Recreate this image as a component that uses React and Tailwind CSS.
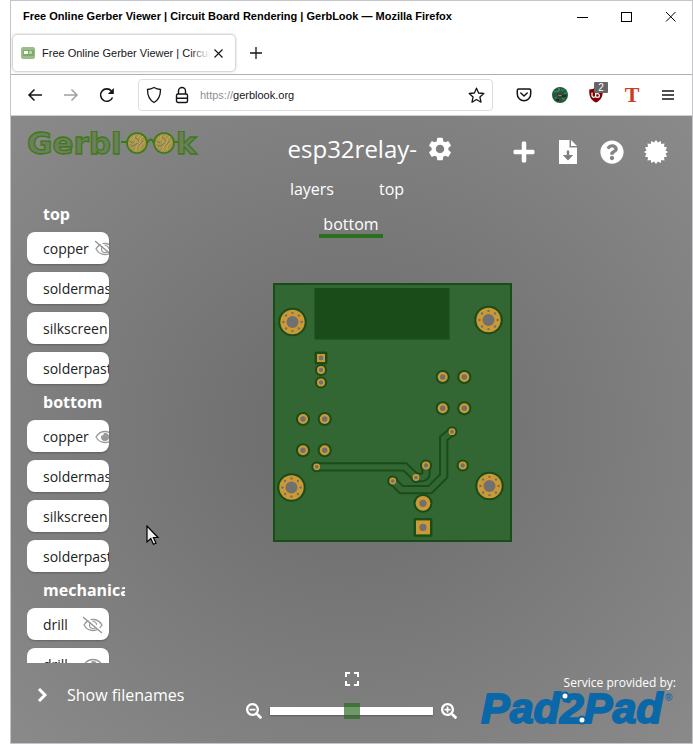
import React from "react";
import { FaPlus, FaQuestionCircle, FaSearchMinus, FaSearchPlus } from "react-icons/fa";
import { MdSettings } from "react-icons/md";

const layerGroups = [
  {
    name: "top",
    layers: [
      { name: "copper", visible: false },
      { name: "soldermask", visible: false },
      { name: "silkscreen", visible: false },
      { name: "solderpaste", visible: false },
    ],
  },
  {
    name: "bottom",
    layers: [
      { name: "copper", visible: true },
      { name: "soldermask", visible: true },
      { name: "silkscreen", visible: true },
      { name: "solderpaste", visible: true },
    ],
  },
  {
    name: "mechanical",
    layers: [
      { name: "drill", visible: false },
      { name: "drill", visible: true },
    ],
  },
];

function WindowTitleBar() {
  return (
    <header className="flex h-[31px] shrink-0 items-center pl-3 pr-[10px]">
      <h1 className="flex-1 truncate text-[11px] font-bold text-black">
        Free Online Gerber Viewer | Circuit Board Rendering | GerbLook — Mozilla Firefox
      </h1>
      <div className="flex gap-[22px]">
        <button aria-label="Minimize" className="flex size-[22px] items-center justify-center">
          <svg width="12" height="12" shapeRendering="crispEdges"><path d="M0 6.5h11" stroke="#000" /></svg>
        </button>
        <button aria-label="Maximize" className="flex size-[22px] items-center justify-center">
          <svg width="12" height="12" shapeRendering="crispEdges"><rect x=".5" y="1.5" width="10" height="9" fill="none" stroke="#000" /></svg>
        </button>
        <button aria-label="Close window" className="flex size-[22px] items-center justify-center">
          <svg width="12" height="12"><path d="M1 1l9.500 9.500M10.500 1L1 10.500" stroke="#000" /></svg>
        </button>
      </div>
    </header>
  );
}

function TabStrip() {
  return (
    <div className="flex h-[43px] shrink-0 items-center gap-[9px] border-b border-[#b0b0b0] pl-[2px]">
      <div className="flex h-9 w-[222px] items-center rounded bg-white pl-2 pr-[9px] shadow-[0_0_3px_rgba(0,0,0,0.45)]">
        <svg width="14" height="12" viewBox="0 0 14 12" className="shrink-0">
          <rect width="14" height="12" rx="2" fill="#9bbd88" />
          <rect x="2" y="3" width="11" height="6" fill="#7faa6c" />
          <rect x="3" y="4" width="4" height="3" fill="#fff" />
          <rect x="8" y="4" width="3" height="3" fill="#b9d3ab" />
        </svg>
        <div className="relative ml-[7px] flex-1 overflow-hidden whitespace-nowrap text-[11px] text-[#15141a]">
          Free Online Gerber Viewer | Circuit Board
          <span className="absolute inset-y-0 right-0 w-5 bg-gradient-to-r from-transparent to-white" />
        </div>
        <button aria-label="Close tab" className="flex size-4 items-center justify-center">
          <svg width="9" height="9"><path d="M.5 .5l8 8M8.500 .5l-8 8" stroke="#15141a" strokeWidth="1.100" /></svg>
        </button>
      </div>
      <button aria-label="New tab" className="flex size-6 items-center justify-center">
        <svg width="12" height="12"><path d="M6 0v12M0 6h12" stroke="#15141a" strokeWidth="1.300" /></svg>
      </button>
    </div>
  );
}

function ToolButton({ label, children }) {
  return (
    <button aria-label={label} className="relative flex h-8 w-9 shrink-0 items-center justify-center">
      {children}
    </button>
  );
}

function NavBar() {
  return (
    <nav className="flex h-10 shrink-0 items-center px-[6px]">
      <ToolButton label="Back">
        <svg width="16" height="16" fill="none" stroke="#15141a" strokeWidth="1.500"><path d="M15 8H2M7.500 2.500L2 8l5.500 5.500" /></svg>
      </ToolButton>
      <ToolButton label="Forward">
        <svg width="16" height="16" fill="none" stroke="#a0a0a3" strokeWidth="1.500"><path d="M1 8h13M8.500 2.500L14 8l-5.500 5.500" /></svg>
      </ToolButton>
      <ToolButton label="Reload">
        <svg width="16" height="16" fill="none" stroke="#15141a" strokeWidth="1.600"><path d="M13.500 10.500A6.200 6.200 0 1 1 12.500 4" /><path d="M14.800 1v6h-6z" fill="#15141a" stroke="none" /></svg>
      </ToolButton>
      <div className="mx-[13px] flex h-8 min-w-0 flex-1 items-center rounded border border-[#dedee2] px-[7px]">
        <svg width="16" height="18" viewBox="0 0 16 18" fill="none" stroke="#15141a" strokeWidth="1.300" className="shrink-0">
          <path d="M8 1.500C5.800 2.800 3.800 3.400 1.500 3.500c0 5 1 10 6.500 13 5.500-3 6.500-8 6.500-13C12.200 3.400 10.200 2.800 8 1.500z" />
        </svg>
        <svg width="14" height="18" viewBox="0 0 14 18" fill="none" stroke="#15141a" strokeWidth="1.400" className="ml-[13px] shrink-0">
          <rect x="1.500" y="8" width="11" height="8.500" rx="1.500" />
          <path d="M3.500 8V5a3.500 3.500 0 0 1 7 0v3M2 12.200h10" />
        </svg>
        <a href="#gerblook" className="ml-[11px] min-w-0 flex-1 truncate text-[11px] text-[#8f8f96]">
          https://<span className="text-[#15141a]">gerblook.org</span>
        </a>
        <button aria-label="Bookmark this page">
          <svg width="17" height="17" viewBox="0 0 17 17" fill="none" stroke="#15141a" strokeWidth="1.300" strokeLinejoin="round">
            <path d="M8.500 1.200l2.100 4.800 5.200.5-3.900 3.500 1.100 5.200-4.500-2.700L4 15.200 5.100 10 1.200 6.500l5.200-.5z" />
          </svg>
        </button>
      </div>
      <ToolButton label="Save to Pocket">
        <svg width="16" height="14" viewBox="0 0 16 14" fill="none" stroke="#15141a" strokeWidth="1.500" strokeLinecap="round" strokeLinejoin="round">
          <path d="M2.500 1h11a1.200 1.200 0 0 1 1.200 1.200V6a6.700 6.700 0 0 1-13.400 0V2.200A1.200 1.200 0 0 1 2.500 1zM4.800 5L8 8l3.200-3" />
        </svg>
      </ToolButton>
      <ToolButton label="Board extension">
        <svg width="16" height="16" viewBox="0 0 16 16">
          <circle cx="8" cy="8" r="8" fill="#1d5b3a" />
          <path d="M2 4.500h5M9 3h3M3 11h3M10 12h3M12 6h3" stroke="#3c7d5c" strokeWidth="1.500" />
          <rect x="5" y="6" width="5" height="6" fill="#453f43" />
          <path d="M6.500 8.500h3M7 1v3" stroke="#8c8f86" />
          <path d="M10 9h4M4 13h3" stroke="#15311f" strokeWidth="2" />
        </svg>
      </ToolButton>
      <ToolButton label="uBlock Origin, 2 blocked">
        <svg width="14" height="16" viewBox="0 0 14 16">
          <path d="M7 .5C4.800 1.800 2.500 2.300.3 2.400 0 8 .8 12.600 7 15.500c6.200-2.900 7-7.500 6.700-13.100C11.500 2.300 9.200 1.800 7 .5z" fill="#800000" />
          <path d="M3 5.500v3a1.600 1.600 0 0 0 3.600 0V6v2.500a1.800 1.800 0 0 0 3.800 0 1.900 1.900 0 0 0-3.200-1.400" fill="none" stroke="#fff" strokeWidth="1.200" />
        </svg>
        <span className="absolute left-4 top-[3px] flex h-[11px] w-[14px] items-center justify-center rounded-[1px] bg-[#666] text-[10px] leading-none text-white">2</span>
      </ToolButton>
      <ToolButton label="Text tool">
        <span className="font-['Liberation_Serif',serif] text-[22px] font-bold leading-none text-[#cc3a20]">T</span>
      </ToolButton>
      <ToolButton label="Open application menu">
        <svg width="12" height="10"><path d="M0 1h12M0 5h12M0 9h12" stroke="#15141a" strokeWidth="1.300" /></svg>
      </ToolButton>
    </nav>
  );
}

function Lens({ cx }) {
  return (
    <g transform={`translate(${cx} 12)`}>
      <circle r="10" fill="#a3934e" stroke="#3c7a12" strokeWidth="1.600" />
      <path d="M-7-3l5-5M-8 1l5-5v-3M-5 5l4-4v-5l4-4M-1 8V4l4-4v-4l3-3M3 7V3l5-5" stroke="#c9a94a" fill="none" />
      <path d="M-6 3h3l3-3M-2-6l4 4M1 3l5-5M-7-1h3" stroke="#77786b" fill="none" />
    </g>
  );
}

function GerblookLogo() {
  return (
    <svg width="174" height="30" viewBox="0 0 174 30" role="img" aria-label="Gerblook">
      <g fontFamily="'DejaVu Sans', sans-serif" fontWeight="bold" fontSize="31" fill="#6c7f5c" stroke="#3c7a12" strokeWidth="1.300">
        <text x="0" y="23">Gerbl</text>
        <text x="149" y="23">k</text>
      </g>
      <path d="M94 11h6M120 12q4-7 7 0M146 11h5" fill="none" stroke="#3c7a12" strokeWidth="2.200" />
      <Lens cx={110} />
      <Lens cx={137} />
    </svg>
  );
}

function EyeIcon({ visible }) {
  return (
    <svg width="20" height="18" viewBox="0 0 20 18" fill="none" stroke="#999" className="shrink-0">
      <path d="M1 9C3 5.500 6 3.500 10 3.500S17 5.500 19 9c-2 3.500-5 5.500-9 5.500S3 12.500 1 9z" strokeWidth="1.300" />
      {visible ? (
        <path d="M10 5a4 4 0 1 1-4 4c0-.6.1-1.100.4-1.600A1.700 1.700 0 0 0 8.600 5.300C9 5.100 9.500 5 10 5z" fill="#999" stroke="none" />
      ) : (
        <>
          <circle cx="10" cy="9" r="3.500" strokeWidth="1.200" />
          <path d="M2 0l18 16" stroke="#fff" strokeWidth="2" />
          <path d="M0 1l19 16" strokeWidth="1.400" />
        </>
      )}
    </svg>
  );
}

function LayerPanel() {
  return (
    <div className="mt-[43px] min-h-0 w-[98px] flex-1 overflow-hidden">
      {layerGroups.map((group) => (
        <section key={group.name}>
          <h3 className="h-7 pl-4 text-base font-bold leading-5 text-white">{group.name}</h3>
          <ul>
            {group.layers.map((layer, i) => (
              <li key={i} className="pb-2">
                <button
                  aria-pressed={layer.visible}
                  className="flex h-8 w-[82px] items-center justify-between gap-[6px] overflow-hidden rounded-lg bg-white pl-4 pr-[6px] pt-[2px] text-sm text-[#222] shadow-[0_1px_2px_rgba(0,0,0,0.25)]"
                >
                  <span>{layer.name}</span>
                  <EyeIcon visible={layer.visible} />
                </button>
              </li>
            ))}
          </ul>
        </section>
      ))}
    </div>
  );
}

const starburst = Array.from({ length: 32 }, (_, i) => {
  const r = i % 2 ? 9.6 : 12;
  const a = (i * Math.PI) / 16;
  return `${12 + r * Math.sin(a)},${12 - r * Math.cos(a)}`;
}).join(" ");

function ViewerHeader() {
  return (
    <div className="flex pl-10 pr-6">
      <div className="w-[220px] pt-[17px]">
        <div className="flex h-8 items-center justify-end gap-[9px] pr-[7px]">
          <h2 className="text-2xl leading-8 text-white">esp32relay-</h2>
          <button aria-label="Board settings">
            <MdSettings className="size-7 text-white" />
          </button>
        </div>
        <div className="mt-2 flex flex-wrap justify-center gap-x-[37px] text-base text-white">
          <a href="#layers" className="p-1 leading-6">layers</a>
          <a href="#top" className="p-1 pr-3 leading-6">top</a>
          <a href="#bottom" aria-current="page" className="mt-[5px] border-b-4 border-[#2b701d] px-1 pt-1 leading-5">bottom</a>
        </div>
      </div>
      <div className="flex flex-1 items-start justify-end gap-5 pt-6 text-white">
        <button aria-label="New board"><FaPlus className="size-6" /></button>
        <button aria-label="Download files">
          <svg width="24" height="24" viewBox="0 0 24 24">
            <path d="M3 0h10.500v7.500H21V24H3z" fill="#fff" />
            <path d="M15 0l6 6h-6z" fill="#fff" />
            <path d="M10.800 10.500h2.400v4.500h4L12 20.500 6.800 15h4z" fill="#7e7e7e" />
          </svg>
        </button>
        <button aria-label="Help"><FaQuestionCircle className="size-6" /></button>
        <button aria-label="Badge">
          <svg width="24" height="24" viewBox="0 0 24 24"><polygon points={starburst} fill="#fff" /></svg>
        </button>
      </div>
    </div>
  );
}

const mountingHoles = [[19.5, 39], [215.5, 37], [18.5, 204.5], [216.5, 203]];
const roundPads = [
  [48, 87, 4], [48, 99.5, 4],
  [169.7, 94, 5], [191.3, 94, 5], [169.7, 125.3, 5], [191.3, 125.3, 5],
  [30, 136, 5], [51.7, 136, 5], [30, 167.3, 5], [51.7, 167.3, 5],
  [43.7, 183.8, 3.4], [179, 148.7, 3.4], [153, 182.5, 4], [189.7, 182.5, 4],
  [143, 194.5, 3.4], [119.7, 198, 3.4], [150, 220.3, 7.4],
];
const squarePads = [[48, 75, 8], [150, 244.4, 14]];
const traces = [
  "M43.700 183.800H132L143 194.500",
  "M143 194.500H149Q153 194 153 190V182.500",
  "M119.700 198L128.300 206.700H157L170.700 193V155.300L179 148.700",
];

function Board() {
  return (
    <svg width="239" height="259" viewBox="0 0 239 259" role="img" aria-label="Bottom side of the board">
      <rect x="1" y="1" width="237" height="257" fill="#326632" stroke="#1a4c1a" strokeWidth="2" />
      <rect x="41.500" y="5" width="135" height="51.500" fill="#1a4c1a" />
      <g fill="none" stroke="#1a4c1a" strokeWidth="9.300">
        {traces.map((d) => <path key={d} d={d} />)}
      </g>
      <g fill="#1a4c1a">
        {mountingHoles.map(([x, y]) => <circle key={`${x}-${y}`} cx={x} cy={y} r="14.300" />)}
        {roundPads.map(([x, y, r]) => <circle key={`${x}-${y}`} cx={x} cy={y} r={r + 2.1} />)}
        {squarePads.map(([x, y, s]) => (
          <rect key={x} x={x - s / 2 - 2.4} y={y - s / 2 - 2.4} width={s + 4.8} height={s + 4.8} rx="1.500" />
        ))}
      </g>
      <g fill="none" stroke="#326632" strokeWidth="5.300">
        {traces.map((d) => <path key={d} d={d} />)}
      </g>
      {mountingHoles.map(([x, y]) => (
        <g key={`${x}-${y}`}>
          <circle cx={x} cy={y} r="12.200" fill="#cc9933" />
          <circle cx={x} cy={y} r="6" fill="#707070" />
          {[0, 1, 2, 3, 4, 5, 6, 7].map((k) => (
            <circle key={k} cx={x + 9.1 * Math.cos((k * Math.PI) / 4)} cy={y + 9.1 * Math.sin((k * Math.PI) / 4)} r="1.200" fill="#707070" />
          ))}
        </g>
      ))}
      {squarePads.map(([x, y, s]) => (
        <g key={x}>
          <rect x={x - s / 2} y={y - s / 2} width={s} height={s} fill="#cc9933" />
          <circle cx={x} cy={y} r={s > 10 ? 3.6 : 2.4} fill="#707070" />
        </g>
      ))}
      {roundPads.map(([x, y, r]) => (
        <g key={`${x}-${y}`}>
          <circle cx={x} cy={y} r={r} fill="#cc9933" />
          <circle cx={x} cy={y} r={r > 7 ? 3.6 : r * 0.54} fill="#707070" />
        </g>
      ))}
    </svg>
  );
}

function Pad2PadLogo() {
  return (
    <svg width="196" height="36" viewBox="0 0 196 36" role="img" aria-label="Pad2Pad">
      <text x="1" y="32" fontFamily="'Liberation Sans', Arial, sans-serif" fontSize="43" fontWeight="bold" fontStyle="italic" fill="#0a67a8" stroke="#0a67a8" strokeWidth="1.800" strokeLinejoin="round">
        Pad2Pad
      </text>
      <text x="185" y="10" fontFamily="'Liberation Sans', Arial, sans-serif" fontSize="10" fontWeight="bold" fill="#0a67a8">®</text>
      <circle cx="85" cy="5" r="3.500" fill="#fff" stroke="#0a67a8" strokeWidth="2" />
      <circle cx="102" cy="29" r="3.500" fill="#fff" stroke="#0a67a8" strokeWidth="2" />
    </svg>
  );
}

function ViewerFooter() {
  return (
    <div className="flex items-end justify-between pb-4 pl-[45px] pr-4">
      <div className="flex flex-col items-center gap-[17px] pb-2">
        <button aria-label="Fullscreen">
          <svg width="14" height="14" fill="none" stroke="#fff" strokeWidth="2"><path d="M1 5V1h4M9 1h4v4M13 9v4H9M5 13H1V9" /></svg>
        </button>
        <div className="flex items-center gap-2 text-white">
          <button aria-label="Zoom out"><FaSearchMinus className="size-4" /></button>
          <input
            type="range"
            aria-label="Zoom"
            min="0"
            max="100"
            defaultValue="50"
            className="h-2 w-[163px] appearance-none bg-white shadow-[0_1px_2px_rgba(0,0,0,0.3)] [&::-webkit-slider-thumb]:size-4 [&::-webkit-slider-thumb]:appearance-none [&::-webkit-slider-thumb]:bg-[rgba(40,106,30,0.68)]"
          />
          <button aria-label="Zoom in"><FaSearchPlus className="size-4" /></button>
        </div>
      </div>
      <a href="#pad2pad" className="flex flex-col items-end text-xs leading-4 text-white">
        Service provided by:
        <Pad2PadLogo />
      </a>
    </div>
  );
}

export default function App() {
  return (
    <div className="h-screen bg-white pl-[10px] font-['Liberation_Sans',Arial,sans-serif]">
      <div className="flex h-full flex-col border border-[#c4c4ca] bg-white">
        <WindowTitleBar />
        <TabStrip />
        <NavBar />
        <main className="relative flex min-h-0 flex-1 border-t border-[#d0d0d0] bg-[radial-gradient(ellipse_at_center,#6a6a6a,#8a8a8a)] font-['Open_Sans','Noto_Sans',sans-serif]">
          <div className="flex w-[190px] shrink-0 flex-col pl-4">
            <a href="#home" className="mt-[15px] block h-[30px]"><GerblookLogo /></a>
            <LayerPanel />
            <button className="flex h-20 items-center gap-5 pb-4 pl-[10px] text-base text-white">
              <svg width="10" height="14" fill="none" stroke="#fff" strokeWidth="3"><path d="M2 1l6 6-6 6" /></svg>
              Show filenames
            </button>
          </div>
          <div className="flex min-w-0 flex-1 flex-col">
            <ViewerHeader />
            <div className="flex min-h-0 flex-1 items-start justify-center pr-[108px] pt-[45px]">
              <Board />
            </div>
            <ViewerFooter />
          </div>
          <svg width="14" height="22" viewBox="0 0 14 22" className="pointer-events-none absolute left-[135px] top-[409px]">
            <path d="M1 1v16l3.800-3.500 2.600 5.800 2.600-1.100-2.600-5.700H12z" fill="#eee" stroke="#000" strokeWidth="1.200" />
          </svg>
        </main>
      </div>
    </div>
  );
}
